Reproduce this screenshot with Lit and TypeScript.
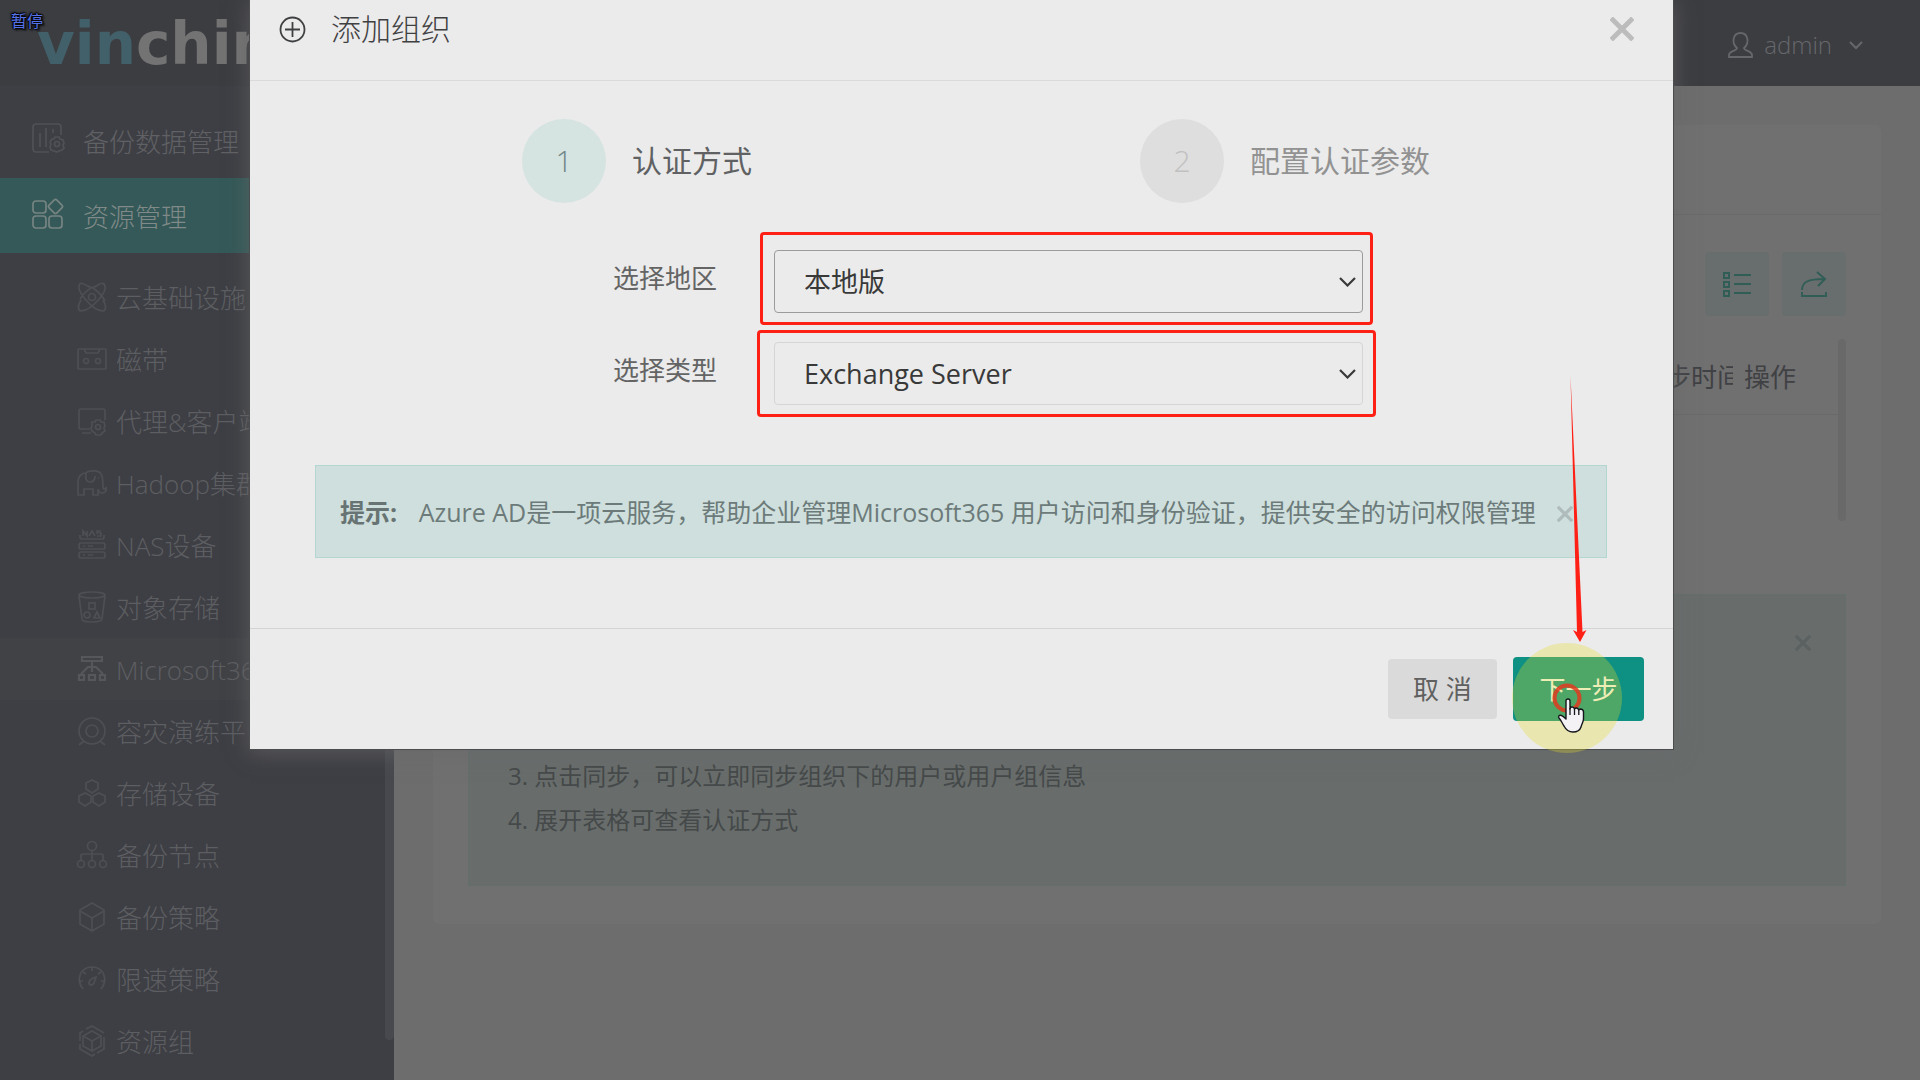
import { LitElement, html, css, svg } from "lit";
import { customElement, property } from "lit/decorators.js";

const icons: Record<string, unknown> = {
  data: svg`<path d="M17 29H4a3 3 0 0 1-3-3V4a3 3 0 0 1 3-3h22a3 3 0 0 1 3 3v8M8 10v14M14 5v19M21 6v4"/><circle cx="25" cy="21" r="2.5"/><path d="M23 14h4l1 2 3 1 1 3-1 2 1 3-2 2-3 1-2 1-3-1-3-1-1-3 1-3-1-2 2-3 2 0z"/>`,
  resource: svg`<rect x="1" y="3" width="13" height="12" rx="3"/><rect x="1" y="18" width="13" height="12" rx="3"/><rect x="17" y="18" width="13" height="12" rx="3"/><rect x="18" y="3" width="11" height="11" rx="2" transform="rotate(45 23.500 8.500)"/>`,
  atom: svg`<circle cx="15" cy="15" r="3.500"/><path d="M12 5C7 1 2 0 2 4c-1 3 2 8 6 13 5 6 12 12 18 12 4-1 3-6 0-11M18 5c5-4 9-5 10-1 1 3-1 7-5 12C18 22 10 29 4 29c-4-1-3-6 0-11M11 4c7 2 14 9 17 15M19 4c-7 2-13 8-16 13"/>`,
  tape: svg`<rect x="1" y="5" width="28" height="20" rx="1"/><path d="M7 5l2 4h12l2-4"/><circle cx="9" cy="17" r="2.500"/><circle cx="21" cy="17" r="2.500"/>`,
  agent: svg`<path d="M13 23H4a2 2 0 0 1-2-2V5a2 2 0 0 1 2-2h22a2 2 0 0 1 2 2v9M5 27h9"/><circle cx="21" cy="21" r="2.500"/><path d="M19 14h4l1 2h3l1 4-1 2 1 3-3 2-1 2h-5l-1-2-3-2-1-3 1-2 0-4h3z"/>`,
  elephant: svg`<path d="M1 27V14c0-5 3-9 8-9 2-3 13-3 15 1 2 3 2 8 2 13 0 3 3 3 3 0 1 3 0 6-4 6-2 0-4-2-4-4v6h-5v-6H7v6zM9 5c-1 7 1 9 4 9s5-2 5-6"/><path d="M21 10h1"/>`,
  nas: svg`<path d="M3 5v2q0 2 2 2h20q2 0 2-2V5"/><rect x="2" y="13" width="26" height="6" rx="2"/><rect x="2" y="22" width="26" height="6" rx="2"/><path d="M6 16h2m3 0h5M6 25h2m3 0h5"/><path d="M6 6V1l4 5V1m2 5 3-5 3 5m6-5h-4v2h4v3h-4"/>`,
  bucket: svg`<ellipse cx="15" cy="3" rx="13" ry="3"/><path d="M2 4l3 23q0 3 10 3t10-3l3-23"/><rect x="12" y="11" width="6" height="6"/><circle cx="10" cy="23" r="3"/><path d="M20 20l3 6h-6z"/>`,
  org: svg`<g stroke-width="2.200"><path d="M5 3h20v4H5zM15 7v11M2 21h5v5H2zM12 21h6v5h-6zM23 21h5v5h-5zM4 20l7-7h8l7 7"/></g>`,
  drill: svg`<circle cx="15" cy="15" r="13"/><circle cx="15" cy="15" r="6"/><path d="M2 29l5-4M28 29l-5-4"/>`,
  storage: svg`<path d="M15 2l6 3v6l-6 4-6-4V5zM8 15l6 3v6l-6 4-6-4v-6zM22 15l6 3v6l-6 4-6-4v-6z"/>`,
  node: svg`<circle cx="15" cy="6" r="4.500"/><circle cx="4" cy="24" r="3.500"/><circle cx="15" cy="24" r="3.500"/><circle cx="26" cy="24" r="3.500"/><path d="M15 11v9M4 20v-5q0-1 2-1h18q2 0 2 1v5"/>`,
  cube: svg`<path d="M15 1l12 7v14l-12 7-12-7V8zM3 9l12 7 12-7M15 16v13"/>`,
  gauge: svg`<path d="M6 25C-2 15 4 3 15 3s17 12 9 22M15 3v4M6 8l3 2M24 8l-3 2M3 17h3M24 17h3M12 19c0-4 4-5 7-6-1 4-2 7-4 8-2 0-3-1-3-2z"/>`,
  group: svg`<path d="M9 3l6-3 12 7M27 11v12l-7 4M18 28l-3 2-12-7v-5M3 15V7l3-2"/><path d="M15 5l9 5v10l-9 5-9-5V10zM6 10l9 5 9-5M15 15v10"/>`,
};

@customElement("line-icon")
export class LineIcon extends LitElement {
  @property() name = "";
  static styles = css`
    :host { display: block; flex: none; width: 32px; height: 32px; }
    svg { display: block; fill: none; stroke: currentColor; stroke-width: 1.7; overflow: visible; }
  `;
  render() {
    return html`<svg width="32" height="32" viewBox="0 0 32 32" aria-hidden="true">${icons[this.name]}</svg>`;
  }
}

@customElement("app-root")
export class AppRoot extends LitElement {
  static styles = css`
    :host {
      display: block;
      font-family: "Open Sans", "Noto Sans CJK SC", sans-serif;
      font-size: 26px;
      line-height: 36px;
      color: #4a4b4f;
    }
    * { box-sizing: border-box; }
    a { color: inherit; text-decoration: none; }
    button { font: inherit; border: 0; padding: 0; background: none; cursor: pointer; }
    svg { display: block; flex: none; fill: none; stroke: currentColor; }

    .app { position: relative; min-height: 100vh; display: flex; flex-direction: column; overflow: hidden; background: #6d6d6d; }
    .topbar {
      height: 86px; padding: 0 57px 0 37px; display: flex; justify-content: space-between;
      background: #3c3d41; color: #66676b;
    }
    .logo { font-family: "DejaVu Sans", sans-serif; font-size: 58px; line-height: 88px; font-weight: 700; color: #737373; }
    .logo-tint { color: #42606a; }
    .user { display: flex; align-items: center; gap: 10px; padding-top: 4px; color: inherit; font-size: 24px; font-weight: 300; }
    .user-caret { margin-left: 7px; }

    .columns { flex: 1; display: flex; }
    .side { position: relative; flex: none; width: 394px; padding-top: 17px; background: #3e3f44; color: #5d5e62; font-weight: 300; }
    .side ul { list-style: none; margin: 0; padding: 0; }
    .side-link { display: flex; align-items: center; gap: 19px; height: 75px; padding: 2px 0 0 32px; color: #606165; }
    .side-link line-icon { color: #505156; margin-bottom: 6px; }
    .side-link.current { background: #345958; color: #808a88; }
    .side-link.current line-icon { color: #768482; }
    .side .sub { padding-top: 13px; }
    .sub-link { display: flex; align-items: center; gap: 7px; height: 62px; padding: 2px 0 0 77px; white-space: nowrap; }
    .sub-link line-icon { color: #4e4f54; }
    .sub-link.current { background: #414246; }
    .sub-link.current line-icon { color: #56575b; }
    .side-scroll { position: absolute; top: 0; right: 0; bottom: 40px; width: 9px; border-radius: 5px; background: #48494f; }

    .main { flex: 1; padding: 39px; }
    .panel { background: #707070; border-radius: 6px; padding-bottom: 38px; }
    .panel-head { height: 90px; border-bottom: 1px solid #6a6a6a; }
    .panel-body { padding: 37px 35px 0; }
    .tools { display: flex; justify-content: flex-end; gap: 13px; }
    .tool { width: 64px; height: 64px; display: grid; place-items: center; border-radius: 4px; background: #686e6e; color: #315d57; }
    .grid-wrap { display: flex; justify-content: space-between; height: 182px; margin-top: 23px; }
    .grid { flex: 1; align-self: flex-start; border-collapse: collapse; table-layout: fixed; width: 100%; }
    .grid th, .grid td { height: 75px; padding: 2px 0 0; border-bottom: 1px solid #6a6a6a; font-weight: 400; text-align: left; color: #404144; white-space: nowrap; overflow: hidden; }
    .grid .col-time { width: 68px; }
    .grid .col-act { width: 105px; padding-left: 11px; }
    .grid-scroll { flex: none; width: 8px; border-radius: 4px; background: #696969; }
    .notes {
      display: flex; justify-content: space-between; align-items: flex-start;
      height: 292px; margin-top: 73px; padding: 40px 34px 40px 39px;
      border: 1px solid #626f6d; background: #686d6c; color: #454949; font-size: 24px; line-height: 44px;
    }
    .notes ol { margin: 0; padding: 119px 0 0; list-style-position: inside; }
    .notes-close { color: #5b6160; }

    .layer { position: absolute; inset: 0; padding: 0 247px 0 250px; }
    .dialog { background: #ebebeb; box-shadow: 0 0 0 1px #4b4c4e, 0 3px 20px 1px rgba(105, 103, 105, 0.65); }
    .dialog-head { display: flex; align-items: center; height: 81px; padding: 0 39px 22px 29px; border-bottom: 1px solid #dadada; color: #3f4042; font-weight: 300; font-size: 30px; }
    .dialog-title { flex: 1; margin: 0 0 0 25px; font: inherit; }
    .dialog-close { color: #bcbcbc; }
    .dialog-body { padding: 38px 66px 70px 65px; }
    .steps { display: grid; grid-template-columns: 1fr 1fr; margin: 0 28px; padding: 0; list-style: none; font-size: 30px; }
    .step { display: flex; align-items: center; gap: 26px; padding-left: 179px; color: #929292; white-space: nowrap; }
    .step.current { color: #5f6163; }
    .bubble { flex: none; width: 84px; height: 84px; display: grid; place-items: center; border-radius: 50%; background: #dedede; color: #c0c0c0; font-weight: 300; }
    .current .bubble { background: #d5e3e1; color: #6f8486; }
    .form { display: grid; gap: 29px; margin: 47px 244px 60px 0; }
    .field { display: flex; gap: 57px; }
    .field label { width: 402px; text-align: right; line-height: 56px; color: #646464; }
    .picker { position: relative; flex: 1; }
    .picker select {
      appearance: none; display: block; width: 100%; height: 63px; padding: 0 29px; border: 1px solid #d5d5d5; border-radius: 4px;
      background: transparent; color: #393939; font: inherit; font-size: 27px; outline: none;
    }
    .picker.focused select { border-color: #9b9b9b; }
    .picker-caret { position: absolute; right: 7px; top: 27px; pointer-events: none; color: #3a3a3a; }
    .mark { position: absolute; border: 3px solid #ff2015; border-radius: 4px; pointer-events: none; }
    .mark.region { inset: -18px -10px -12px -14px; }
    .mark.kind { inset: -12px -13px -12px -17px; }
    .tip {
      display: flex; align-items: center; height: 93px; padding: 0 33px 0 24px;
      border: 1px solid #b4d6d1; background: #cfdfdd; color: #6c7b7a; font-size: 25px;
    }
    .tip p { flex: 1; margin: 0; white-space: nowrap; }
    .tip strong { margin-right: 15px; color: #677473; }
    .tip-close { padding-top: 4px; color: #afbcbb; }
    .dialog-foot { display: flex; justify-content: flex-end; align-items: center; gap: 16px; height: 121px; padding: 0 29px; border-top: 1px solid #d3d3d3; }
    .cancel { width: 109px; height: 60px; border-radius: 4px; background: #dadada; color: #606060; }
    .next-slot { position: relative; }
    .next { display: block; width: 131px; height: 64px; border-radius: 4px; background: #0e9083; color: #f2f5f4; }
    .pointer { position: absolute; left: -1px; top: -281px; pointer-events: none; stroke: none; }
    .status { position: absolute; left: 11px; top: 9px; font-size: 16px; line-height: 24px; color: #5573e6;
      text-shadow: 1px 0 1px #08080c, -1px 0 1px #08080c, 0 1px 1px #08080c, 0 -1px 1px #08080c, 2px 2px 2px #08080c, -1px -1px 2px #08080c; }
  `;

  private subItems: [string, string][] = [
    ["atom", "云基础设施"],
    ["tape", "磁带"],
    ["agent", "代理&客户端"],
    ["elephant", "Hadoop集群"],
    ["nas", "NAS设备"],
    ["bucket", "对象存储"],
    ["org", "Microsoft365"],
    ["drill", "容灾演练平台"],
    ["storage", "存储设备"],
    ["node", "备份节点"],
    ["cube", "备份策略"],
    ["gauge", "限速策略"],
    ["group", "资源组"],
  ];

  private cross(size: number, width: number) {
    return html`<svg width=${size} height=${size} viewBox="0 0 20 20" stroke-width=${width} aria-hidden="true"><path d="M1 1l18 18M19 1L1 19" /></svg>`;
  }

  private renderPage() {
    return html`
      <header class="topbar">
        <a class="logo" href="#"><span class="logo-tint">vin</span>chin</a>
        <button class="user">
          <svg width="27" height="27" viewBox="0 0 27 27" stroke-width="1.800"><path d="M10 16C4 11 6 1 13.500 1S23 11 17 16c0 3 8 3 8 7v2H2v-2c0-4 8-4 8-7z" /></svg>
          admin
          <svg class="user-caret" width="14" height="9" viewBox="0 0 14 9" stroke-width="2"><path d="M1 1l6 6 6-6" /></svg>
        </button>
      </header>
      <div class="columns">
        <nav class="side">
          <ul>
            <li><a class="side-link" href="#"><line-icon name="data"></line-icon>备份数据管理</a></li>
            <li>
              <a class="side-link current" href="#"><line-icon name="resource"></line-icon>资源管理</a>
              <ul class="sub">
                ${this.subItems.map(
                  ([icon, label]) => html`<li>
                    <a class="sub-link ${icon === "org" ? "current" : ""}" href="#"><line-icon name=${icon}></line-icon>${label}</a>
                  </li>`
                )}
              </ul>
            </li>
          </ul>
          <div class="side-scroll"></div>
        </nav>
        <main class="main">
          <section class="panel">
            <div class="panel-head"></div>
            <div class="panel-body">
              <div class="tools">
                <button class="tool" aria-label="列">
                  <svg width="28" height="26" viewBox="0 0 28 26" stroke-width="2"><path d="M1 2h5v5H1zM1 11h5v5H1zM1 20h5v5H1zM11 4h17M11 13h17M11 22h17" /></svg>
                </button>
                <button class="tool" aria-label="导出">
                  <svg width="26" height="28" viewBox="0 0 26 28" stroke-width="1.900"><path d="M1 20C1 12 7 9 23 9M16 2l8 7-7 7M1 22v4h24v-4" /></svg>
                </button>
              </div>
              <div class="grid-wrap">
                <table class="grid">
                  <thead>
                    <tr><td></td><th class="col-time">步时间</th><th class="col-act">操作</th></tr>
                  </thead>
                </table>
                <div class="grid-scroll"></div>
              </div>
              <div class="notes">
                <ol start="3">
                  <li>点击同步，可以立即同步组织下的用户或用户组信息</li>
                  <li>展开表格可查看认证方式</li>
                </ol>
                <button class="notes-close" aria-label="关闭">${this.cross(16, 4)}</button>
              </div>
            </div>
          </section>
        </main>
      </div>
    `;
  }

  private renderDialog() {
    return html`
      <div class="layer">
        <section class="dialog" role="dialog" aria-labelledby="title">
          <header class="dialog-head">
            <svg width="27" height="27" viewBox="0 0 27 27" stroke-width="1.800"><circle cx="13.500" cy="13.500" r="12" /><path d="M13.500 6v15M6 13.500h15" /></svg>
            <h2 class="dialog-title" id="title">添加组织</h2>
            <button class="dialog-close" aria-label="关闭">${this.cross(24, 4)}</button>
          </header>
          <div class="dialog-body">
            <ol class="steps">
              <li class="step current"><span class="bubble">1</span>认证方式</li>
              <li class="step"><span class="bubble">2</span>配置认证参数</li>
            </ol>
            <form class="form">
              <div class="field">
                <label for="region">选择地区</label>
                <div class="picker focused">
                  <select id="region"><option>本地版</option></select>
                  ${this.renderCaret()}
                  <div class="mark region"></div>
                </div>
              </div>
              <div class="field">
                <label for="kind">选择类型</label>
                <div class="picker">
                  <select id="kind"><option>Exchange Server</option></select>
                  ${this.renderCaret()}
                  <div class="mark kind"></div>
                </div>
              </div>
            </form>
            <div class="tip">
              <p><strong>提示:</strong> Azure AD是一项云服务，帮助企业管理Microsoft365 用户访问和身份验证，提供安全的访问权限管理</p>
              <button class="tip-close" aria-label="关闭">${this.cross(16, 4)}</button>
            </div>
          </div>
          <footer class="dialog-foot">
            <button class="cancel">取 消</button>
            <div class="next-slot">
              <button class="next">下一步</button>
              ${this.renderPointer()}
            </div>
          </footer>
        </section>
      </div>
    `;
  }

  private renderCaret() {
    return html`<svg class="picker-caret" width="17" height="10" viewBox="0 0 17 10" stroke-width="2.200"><path d="M1 1l7.500 7.500L16 1" /></svg>`;
  }

  /* Guide arrow, click highlight and hand cursor drawn over the confirm button. */
  private renderPointer() {
    return html`<svg class="pointer" width="112" height="380" viewBox="0 0 112 380" aria-hidden="true">
      <circle cx="55" cy="322" r="55" fill="#e6da28" fill-opacity="0.300" />
      <path d="M58.500 0L70.500 256l4-2-6.500 12L61 254l4 2z" fill="#ff2015" />
      <circle cx="55" cy="322" r="12.500" stroke="#e23a20" stroke-opacity="0.850" stroke-width="4" fill="none" />
      <path transform="translate(46 322)" fill="#f4f2f4" stroke="#15171c" stroke-width="1.400" stroke-linejoin="round"
        d="M8 3Q8 1 10 1t2 2v8q0-2 2-2t2.500 2q.500-1 2-1t2.300 2q.500-1 2-1 2.700.500 2.700 3v7c0 3-2 5-2.500 8-1 3-3 5-8 5s-7-2-9-6C4 25 3 22 1 20c-1-1.500 0-3.500 2.500-2.500C5 18 7 20 8 21z" />
      <path transform="translate(46 322)" d="M12 10v7M16.500 11v6M20.800 12v5" stroke="#15171c" stroke-width="1.300" fill="none" />
    </svg>`;
  }

  render() {
    return html`<div class="app" lang="zh-CN">
      ${this.renderPage()} ${this.renderDialog()}
      <div class="status">暂停</div>
    </div>`;
  }
}
